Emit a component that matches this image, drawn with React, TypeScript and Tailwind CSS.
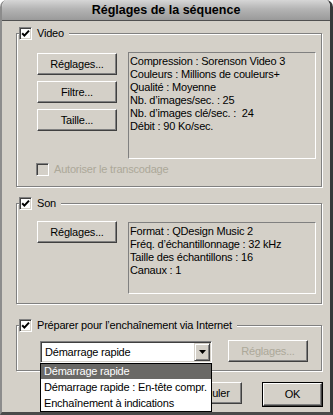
import React from 'react';

const FACE = 'bg-[#d4d0c8]';

const CheckBox: React.FC<{ checked?: boolean; disabled?: boolean }> = ({ checked, disabled }) => (
  <span
    className={`flex items-center justify-center w-[13px] h-[13px] shrink-0 border border-t-[#808080] border-l-[#808080] border-b-white border-r-white shadow-[inset_1px_1px_0_#404040,inset_-1px_-1px_0_#d4d0c8] ${
      disabled ? 'bg-[#d4d0c8]' : 'bg-white'
    }`}
  >
    {checked && (
      <svg width="9" height="9" viewBox="0 0 9 9">
        <path d="M1.2 4.2 L3.4 6.6 L8 1.6" stroke="black" strokeWidth="2" fill="none" />
      </svg>
    )}
  </span>
);

const Button: React.FC<{ label: string; width?: string; disabled?: boolean; isDefault?: boolean }> = ({
  label,
  width = 'w-[80px]',
  disabled,
  isDefault,
}) => {
  const inner = (
    <div
      className={`flex items-center justify-center h-full w-full border border-t-white border-l-white border-r-[#404040] border-b-[#404040] shadow-[inset_-1px_-1px_0_#808080] ${
        disabled ? 'text-[#aca899]' : 'text-black'
      }`}
    >
      {label}
    </div>
  );
  if (isDefault) {
    return <div className={`${width} h-[25px] border border-black`}>{inner}</div>;
  }
  return <div className={`${width} h-[22px]`}>{inner}</div>;
};

const InfoBox: React.FC<{ lines: string[]; height: string }> = ({ lines, height }) => (
  <div
    className={`w-[188px] ${height} border border-t-[#808080] border-l-[#808080] border-b-white border-r-white pl-[1px] pt-[2px] leading-[13px]`}
  >
    {lines.map((l, i) => (
      <div key={i} className="whitespace-pre">
        {l}
      </div>
    ))}
  </div>
);

const Group: React.FC<{ label: string; className: string; children: React.ReactNode }> = ({
  label,
  className,
  children,
}) => (
  <fieldset
    className={`ml-[14px] w-[306px] border border-[#808080] shadow-[inset_1px_1px_0_#fff,1px_1px_0_#fff] ${className}`}
  >
    <legend className={`ml-[2px] pr-[5px] flex items-center gap-[5px] h-[13px] ${FACE}`}>
      <CheckBox checked />
      <span>{label}</span>
    </legend>
    {children}
  </fieldset>
);

const App: React.FC = () => {
  return (
    <div className="w-[333px] h-[415px] bg-white font-['Liberation_Sans',Arial,sans-serif] text-[11px] tracking-[-0.2px] text-black">
      <div className="flex flex-col w-full h-full rounded-t-[7px] overflow-hidden border-l-2 border-l-[#8c8c8c] border-r-[3px] border-r-[#3a3a3a] border-b-[3px] border-b-[#4a4a4a]">
        {/* title bar */}
        <div className="h-[21px] shrink-0 flex items-center justify-center border-b border-[#505050] bg-[linear-gradient(to_bottom,#d6d6d6,#b4b4b4_45%,#9a9a9a)]">
          <span className="font-bold text-[12.5px] tracking-normal pt-[1px]">Réglages de la séquence</span>
        </div>

        {/* body */}
        <div className={`flex-1 flex flex-col ${FACE}`}>
          <Group label="Video" className="mt-[6px] pb-[10px]">
            <div className="flex items-start mt-[12px]">
              <div className="flex flex-col gap-[6px] ml-[20px] mt-[1px]">
                <Button label="Réglages..." />
                <Button label="Filtre..." />
                <Button label="Taille..." />
              </div>
              <div className="ml-[11px]">
                <InfoBox
                  height="h-[107px]"
                  lines={[
                    'Compression : Sorenson Video 3',
                    'Couleurs : Millions de couleurs+',
                    'Qualité : Moyenne',
                    'Nb. d’images/sec. : 25',
                    'Nb. d’images clé/sec. :  24',
                    'Débit : 90 Ko/sec.',
                  ]}
                />
              </div>
            </div>
            <div className="flex items-center gap-[5px] ml-[19px] mt-[4px] h-[13px] text-[#aca899]">
              <CheckBox disabled />
              <span>Autoriser le transcodage</span>
            </div>
          </Group>

          <Group label="Son" className="mt-[10px] pb-[9px]">
            <div className="flex items-start mt-[12px]">
              <div className="ml-[20px] mt-[-1px]">
                <Button label="Réglages..." />
              </div>
              <div className="ml-[11px]">
                <InfoBox
                  height="h-[72px]"
                  lines={[
                    'Format : QDesign Music 2',
                    'Fréq. d’échantillonnage : 32 kHz',
                    'Taille des échantillons : 16',
                    'Canaux : 1',
                  ]}
                />
              </div>
            </div>
          </Group>

          <Group label="Préparer pour l’enchaînement via Internet" className="mt-[15px] pb-[7px]">
            <div className="flex items-start mt-[9px]">
              <div className="relative ml-[23px] w-[172px] h-[22px]">
                <div className="flex items-center w-full h-full bg-white border border-t-[#808080] border-l-[#808080] border-b-white border-r-white shadow-[inset_1px_1px_0_#404040,inset_-1px_-1px_0_#d4d0c8]">
                  <span className="flex-1 pl-[4px]">Démarrage rapide</span>
                  <div className={`w-[16px] h-[18px] mr-[1px] ${FACE} flex items-center justify-center border border-t-[#d4d0c8] border-l-[#d4d0c8] border-r-[#404040] border-b-[#404040] shadow-[inset_1px_1px_0_#fff,inset_-1px_-1px_0_#808080]`}>
                    <svg width="7" height="4" viewBox="0 0 7 4">
                      <path d="M0 0 H7 L3.5 4 Z" fill="black" />
                    </svg>
                  </div>
                </div>
                <div className="absolute left-0 top-full z-10 w-[172px] bg-white border border-black leading-[16px] whitespace-nowrap">
                  <div className="bg-[#6a6966] text-white pl-[3px] h-[15px] leading-[15px]">Démarrage rapide</div>
                  <div className="pl-[3px] h-[16px]">Démarrage rapide : En-tête compr.</div>
                  <div className="pl-[3px] h-[16px]">Enchaînement à indications</div>
                </div>
              </div>
              <div className="ml-[16px] mt-[-1px]">
                <Button label="Réglages..." disabled />
              </div>
            </div>
          </Group>

          <div className="flex justify-end gap-[20px] mt-[11px] pr-[7px]">
            <Button label="Annuler" width="w-[61px]" />
            <Button label="OK" width="w-[61px]" isDefault />
          </div>
        </div>
      </div>
    </div>
  );
};

export default App;
